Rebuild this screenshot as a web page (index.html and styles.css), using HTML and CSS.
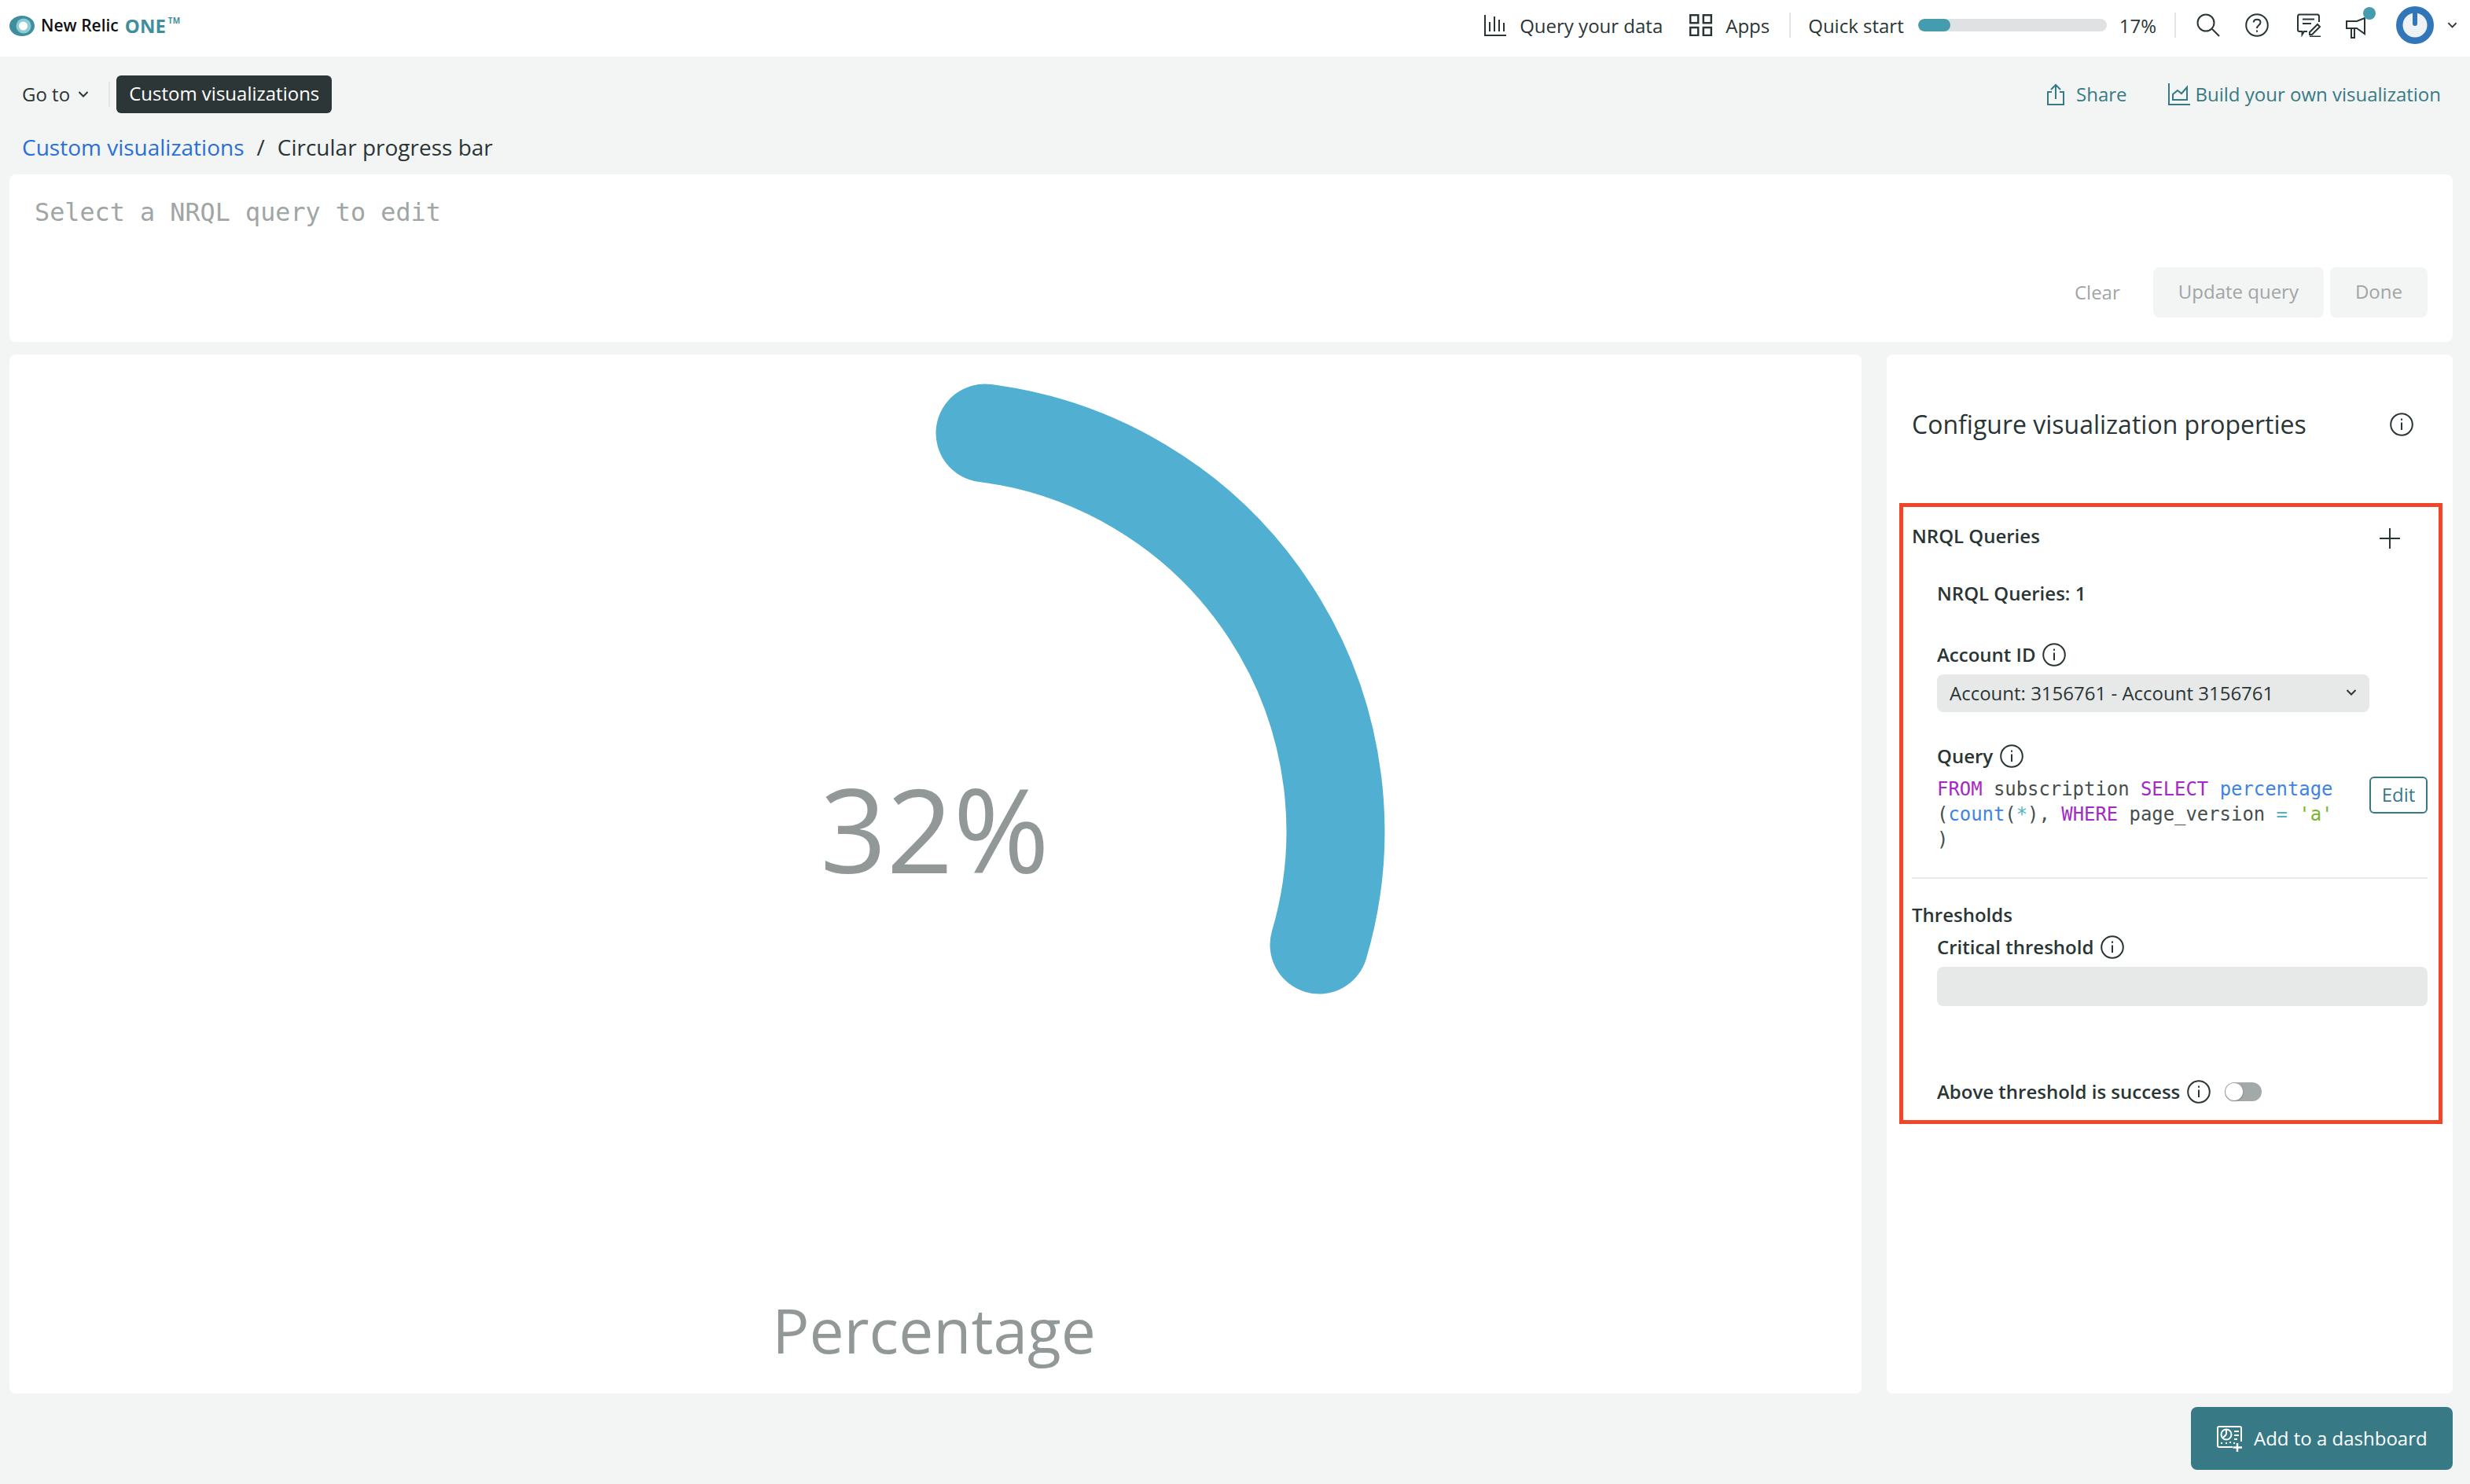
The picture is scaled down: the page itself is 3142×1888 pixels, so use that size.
FILE: index.html
```html
<!DOCTYPE html>
<html>
<head>
    <title>Circular progress bar</title>
    <link rel="stylesheet" href="styles.css">
</head>
<body>
<svg class="defs" width="0" height="0">
    <symbol id="info" viewBox="0 0 30 30">
        <circle cx="15" cy="15" r="13.8" fill="none" stroke="currentColor" stroke-width="2"/>
        <path d="M15 12.5V22" stroke="currentColor" stroke-width="2" fill="none"/>
        <path d="M15 7.5V9.8" stroke="currentColor" stroke-width="2" fill="none"/>
    </symbol>
    <symbol id="chevron" viewBox="0 0 14 10">
        <path d="M1.5 2L7 7.5L12.5 2" stroke="currentColor" stroke-width="2" fill="none"/>
    </symbol>
</svg>

<header class="topbar">
    <div class="logo">
        <svg class="logo-mark" viewBox="0 0 32 26">
            <ellipse cx="16" cy="13" rx="16" ry="13" fill="#3f8e9e"/>
            <circle cx="18" cy="13" r="9.5" fill="#8ccdd4"/>
            <circle cx="17.5" cy="13" r="5.5" fill="#fff"/>
        </svg>
        <span class="logo-name">New Relic</span>
        <span class="logo-one">ONE</span><span class="logo-tm">TM</span>
    </div>
    <nav class="topnav">
        <a class="topnav-item query-link">
            <svg class="icon-query" viewBox="0 0 28 28" fill="none" stroke="#2a3536" stroke-width="2">
                <path d="M1 1V27H28"/>
                <path d="M7 10V22M13 3V22M19 7V22M25 11V22"/>
            </svg>
            Query your data
        </a>
        <a class="topnav-item apps-link">
            <svg class="icon-apps" viewBox="0 0 29 28" fill="none" stroke="#2a3536" stroke-width="2.5">
                <rect x="1.2" y="1.2" width="10" height="10"/>
                <rect x="17.8" y="1.2" width="10" height="10"/>
                <rect x="1.2" y="17" width="10" height="10"/>
                <rect x="17.8" y="17" width="10" height="10"/>
            </svg>
            Apps
        </a>
        <span class="divider first-divider"></span>
        <span class="quick-label">Quick start</span>
        <div class="progress"><div class="progress-fill" style="width: 17%"></div></div>
        <span class="quick-value">17%</span>
        <span class="divider second-divider"></span>
        <svg class="icon-search" viewBox="0 0 30 30" fill="none" stroke="#2a3536" stroke-width="2">
            <circle cx="12" cy="12" r="10.5"/>
            <path d="M20 20L29 29"/>
        </svg>
        <svg class="icon-help" viewBox="0 0 30 30" fill="none" stroke="#2a3536" stroke-width="2">
            <circle cx="15" cy="15" r="13.8"/>
            <path d="M10.8 11.5C10.8 6.5 19.5 6.5 19.5 11.5C19.5 15 15 15 15 19"/>
            <path d="M15 21.5V23.8"/>
        </svg>
        <svg class="icon-feedback" viewBox="0 0 30 30" fill="none" stroke="#2a3536" stroke-width="2">
            <path d="M13 23H9L6.5 27V23H3C2 23 1 22 1 21V4C1 2.500 2 1.500 3 1.500H26C27 1.500 28 2.500 28 4V11"/>
            <path d="M7 7.500H22M7 13H18"/>
            <path d="M16 24L26 14L29 17L19 27H16Z"/>
            <path d="M16 29.500H30"/>
        </svg>
        <span class="notify">
            <svg class="icon-megaphone" viewBox="0 0 30 30" fill="none" stroke="#2a3536" stroke-width="2">
                <path d="M1 8H14L24 4V24L14 17H1Z"/>
                <path d="M7 17V29H11V17"/>
            </svg>
            <span class="notify-dot"></span>
        </span>
        <svg class="avatar" viewBox="0 0 48 48">
            <circle cx="24" cy="24" r="24" fill="#2f77b8"/>
            <circle cx="24" cy="24" r="15.500" fill="#eef2f5"/>
            <path d="M24 6V22" stroke="#2f77b8" stroke-width="6" stroke-linecap="round" fill="none"/>
        </svg>
        <svg class="chevron-sm" viewBox="0 0 14 10"><use href="#chevron"/></svg>
    </nav>
</header>

<div class="toolbar">
    <div class="toolbar-left">
        <span class="goto">Go to</span>
        <svg class="chevron-goto"><use href="#chevron"/></svg>
        <span class="toolbar-sep"></span>
        <span class="pill">Custom visualizations</span>
    </div>
    <div class="toolbar-right">
        <a class="action share-action">
            <svg class="icon-share" viewBox="0 0 22 28" fill="none" stroke="#377a85" stroke-width="2">
                <path d="M6 11H1V27H21V11H16"/>
                <path d="M11 20V2M5 8L11 2L17 8"/>
            </svg>
            Share
        </a>
        <a class="action">
            <svg class="icon-build" viewBox="0 0 28 28" fill="none" stroke="#377a85" stroke-width="2">
                <path d="M1 0V27H28"/>
                <path d="M6 21V14L12 9L17 13L24 5V21Z"/>
            </svg>
            Build your own visualization
        </a>
    </div>
</div>

<div class="breadcrumb">
    <a class="crumb-link">Custom visualizations</a>
    <span class="crumb-sep">/</span>
    <span>Circular progress bar</span>
</div>

<section class="query-card">
    <div class="query-placeholder">Select a NRQL query to edit</div>
    <div class="query-actions">
        <span class="btn-clear">Clear</span>
        <span class="btn-disabled">Update query</span>
        <span class="btn-disabled">Done</span>
    </div>
</section>

<main class="main-row">
    <section class="chart-card">
        <svg class="chart" viewBox="12 451 2356 1322">
            <path d="M1253 551A510.500 510.500 0 0 1 1678 1202" fill="none" stroke="#51b0d2" stroke-width="125" stroke-linecap="round"/>
            <text x="1189" y="1111" text-anchor="middle" class="chart-value">32%</text>
            <text x="1188" y="1722" text-anchor="middle" class="chart-label">Percentage</text>
        </svg>
    </section>

    <aside class="config-panel">
        <div class="config-head">
            <h2>Configure visualization properties</h2>
            <svg class="info-lg"><use href="#info"/></svg>
        </div>

        <div class="config-box">
            <div class="row-between nrql-head">
                <span class="label">NRQL Queries</span>
                <svg class="icon-plus" viewBox="0 0 26 26" fill="none" stroke="#2a3536" stroke-width="2">
                    <path d="M13 0V26M0 13H26"/>
                </svg>
            </div>
            <div class="indent">
                <div class="label count-label">NRQL Queries: 1</div>
                <div class="label label-info account-label">Account ID <svg class="info"><use href="#info"/></svg></div>
                <div class="select">
                    Account: 3156761 - Account 3156761
                    <svg class="chevron-select" viewBox="0 0 14 10"><use href="#chevron"/></svg>
                </div>
                <div class="label label-info query-label">Query <svg class="info"><use href="#info"/></svg></div>
                <div class="code-row">
                    <code class="code">
                        <div><span class="kw">FROM</span> subscription <span class="kw">SELECT</span> <span class="fn">percentage</span></div>
                        <div>(<span class="fn">count</span>(<span class="op">*</span>), <span class="kw">WHERE</span> page_version <span class="op">=</span> <span class="str">'a'</span></div>
                        <div>)</div>
                    </code>
                    <span class="btn-edit">Edit</span>
                </div>
            </div>
            <hr class="rule">
            <div class="label thresholds-label">Thresholds</div>
            <div class="indent">
                <div class="label label-info critical-label">Critical threshold <svg class="info"><use href="#info"/></svg></div>
                <div class="field"></div>
                <div class="label label-info above-label">
                    Above threshold is success <svg class="info"><use href="#info"/></svg>
                    <span class="toggle"><span class="toggle-knob"></span></span>
                </div>
            </div>
        </div>
    </aside>
</main>

<footer class="footer">
    <a class="btn-primary">
        <svg class="icon-dash" viewBox="0 0 33 33" fill="none" stroke="#fff" stroke-width="2">
            <path d="M20 27H3C2 27 1 26 1 25V3C1 2 2 1 3 1H29C30 1 31 2 31 3V20"/>
            <circle cx="12" cy="11" r="6.500"/>
            <path d="M12 11V5M12 11L8 15"/>
            <path d="M22 7H28M22 12H28M22 17H26"/>
            <path d="M5 22H7M11 22H13M17 20V22M21 22H23"/>
            <path d="M26 22V33M20.500 27.500H32" stroke-width="2.500"/>
        </svg>
        <span class="btn-primary-text">Add to a dashboard</span>
    </a>
</footer>
</body>
</html>
```

FILE: styles.css
```css
* {
    box-sizing: border-box;
}
body {
    margin: 0;
    width: 3142px;
    height: 1888px;
    overflow: hidden;
    background-color: #f3f4f4;
    color: #2a3536;
    font-family: "Open Sans", sans-serif;
    font-size: 24px;
}
.defs {
    position: absolute;
}

/* top bar */
.topbar {
    height: 72px;
    background-color: white;
    display: flex;
    align-items: center;
    padding: 0 16px 8px 12px;
}
.logo {
    display: flex;
    align-items: center;
}
.logo-mark {
    width: 32px;
    height: 26px;
    margin-right: 8px;
    margin-top: 1px;
}
.logo-name {
    font-size: 21px;
    font-weight: 600;
    color: #111;
    margin-right: 8px;
}
.logo-one {
    font-size: 24px;
    font-weight: 700;
    color: #3f8e9e;
}
.logo-tm {
    font-size: 10px;
    font-weight: 700;
    color: #3f8e9e;
    margin: -12px 0 0 3px;
}
.topnav {
    margin-left: auto;
    display: flex;
    align-items: center;
}
.topnav-item {
    display: flex;
    align-items: center;
    gap: 17px;
}
.query-link {
    margin-right: 34px;
}
.icon-query {
    width: 28px;
    height: 28px;
}
.icon-apps {
    width: 29px;
    height: 28px;
}
.divider {
    width: 2px;
    height: 32px;
    background-color: #e3e5e5;
}
.first-divider {
    margin: 0 22px 0 25px;
}
.second-divider {
    margin: 0 26px 0 23px;
}
.progress {
    width: 240px;
    height: 16px;
    border-radius: 8px;
    background-color: #e0e1e3;
    margin: 0 16px 0 18px;
    overflow: hidden;
}
.progress-fill {
    height: 100%;
    border-radius: 8px;
    background-color: #459cae;
}
.icon-search {
    width: 30px;
    height: 30px;
    margin-right: 32px;
}
.icon-help {
    width: 30px;
    height: 30px;
    margin-right: 36px;
}
.icon-feedback {
    width: 30px;
    height: 30px;
    margin-right: 32px;
}
.notify {
    position: relative;
    display: flex;
    width: 38px;
    margin-right: 26px;
}
.icon-megaphone {
    width: 30px;
    height: 30px;
    margin-top: 4px;
}
.notify-dot {
    position: absolute;
    left: 22px;
    top: -6px;
    width: 16px;
    height: 16px;
    border-radius: 50%;
    background-color: #459cae;
}
.avatar {
    width: 48px;
    height: 48px;
    margin-right: 17px;
}
.chevron-sm {
    width: 13px;
    height: 10px;
}

/* toolbar */
.toolbar {
    display: flex;
    justify-content: space-between;
    align-items: center;
    padding: 24px 37px 0 28px;
}
.toolbar-left {
    display: flex;
    align-items: center;
}
.goto {
    margin-top: -2px;
}
.chevron-goto {
    width: 14px;
    height: 10px;
    margin-left: 10px;
}
.toolbar-sep {
    width: 2px;
    height: 32px;
    background-color: #e3e5e5;
    margin: 0 8px 0 25px;
}
.pill {
    height: 48px;
    line-height: 46px;
    padding: 0 16px;
    border-radius: 6px;
    background-color: #2c3637;
    color: white;
}
.toolbar-right {
    display: flex;
    align-items: center;
    color: #377a85;
}
.action {
    display: flex;
    align-items: center;
    gap: 15px;
    padding-bottom: 2px;
}
.share-action {
    margin-right: 52px;
}
.icon-share {
    width: 22px;
    height: 28px;
    margin-bottom: -2px;
}
.icon-build {
    width: 28px;
    height: 28px;
    margin-bottom: -2px;
    margin-right: -8px;
}

/* breadcrumb */
.breadcrumb {
    display: flex;
    gap: 16px;
    height: 38px;
    line-height: 38px;
    margin: 24px 0 16px;
    padding-left: 28px;
    font-size: 28px;
}
.crumb-link {
    color: #2a6fd8;
}

/* query editor */
.query-card {
    height: 213px;
    margin: 0 22px 0 12px;
    padding: 26px 32px 0;
    background-color: white;
    border-radius: 8px;
}
.query-placeholder {
    height: 44px;
    line-height: 44px;
    font-family: "DejaVu Sans Mono", monospace;
    font-size: 31.8px;
    color: #a0a5a5;
}
.query-actions {
    display: flex;
    align-items: center;
    justify-content: flex-end;
    gap: 8px;
    margin-top: 48px;
    color: #a0a5a5;
}
.btn-clear {
    margin-right: 34px;
    padding-bottom: 2px;
}
.btn-disabled {
    height: 64px;
    line-height: 62px;
    padding: 0 32px;
    border-radius: 8px;
    background-color: #f3f4f4;
}

/* chart + config */
.main-row {
    display: flex;
    gap: 32px;
    height: 1322px;
    margin: 16px 22px 0 12px;
}
.chart-card {
    flex: 1;
    background-color: white;
    border-radius: 8px;
    overflow: hidden;
}
.chart {
    display: block;
    width: 100%;
    height: 100%;
}
.chart-value {
    font-size: 148px;
    font-weight: 400;
    fill: #929898;
}
.chart-label {
    font-size: 78.5px;
    font-weight: 400;
    fill: #929898;
}
.config-panel {
    width: 720px;
    padding: 66px 13px 0 16px;
    background-color: white;
    border-radius: 8px;
}
.config-head {
    display: flex;
    align-items: center;
    justify-content: space-between;
    height: 44px;
    padding: 0 37px 0 16px;
    margin-bottom: 79px;
}
.config-head h2 {
    margin: 0;
    font-size: 32px;
    font-weight: 400;
}
.info-lg {
    width: 30px;
    height: 30px;
    margin-top: 1px;
}
.info {
    width: 30px;
    height: 30px;
    margin-left: 3px;
}
.config-box {
    height: 790px;
    border: 5px solid #f04528;
    padding: 22px 14px 0 11px;
}
.label {
    font-weight: 600;
    line-height: 30px;
    height: 32px;
}
.label-info {
    display: flex;
    align-items: center;
    gap: 6px;
}
.row-between {
    display: flex;
    align-items: center;
    justify-content: space-between;
}
.nrql-head {
    height: 32px;
    padding-right: 35px;
}
.icon-plus {
    width: 26px;
    height: 26px;
    margin-top: 4px;
}
.indent {
    padding-left: 32px;
}
.count-label {
    margin-top: 41px;
}
.account-label {
    margin-top: 45px;
}
.select {
    width: 550px;
    height: 48px;
    margin-top: 9px;
    padding: 0 16px 2px 16px;
    display: flex;
    align-items: center;
    justify-content: space-between;
    border-radius: 8px;
    background-color: #e7e9e9;
}
.chevron-select {
    width: 14px;
    height: 10px;
}
.query-label {
    margin-top: 40px;
}
.code-row {
    display: flex;
    justify-content: space-between;
    margin-top: 10px;
}
.code {
    font-family: "DejaVu Sans Mono", monospace;
    font-size: 23.9px;
    line-height: 32px;
    color: #464e4e;
}
.kw {
    color: #a32ac4;
}
.fn {
    color: #3e84e0;
}
.op {
    color: #4db6c6;
}
.str {
    color: #7ab32e;
}
.btn-edit {
    width: 74px;
    height: 47px;
    line-height: 41px;
    text-align: center;
    border: 2px solid #377a85;
    border-radius: 6px;
    color: #377a85;
}
.rule {
    height: 2px;
    margin: 32px 0 0;
    border: 0;
    background-color: #e9ebeb;
}
.thresholds-label {
    margin-top: 31px;
}
.critical-label {
    margin-top: 8px;
}
.field {
    height: 50px;
    margin-top: 9px;
    border-radius: 8px;
    background-color: #e7e9e9;
}
.above-label {
    margin-top: 93px;
}
.toggle {
    position: relative;
    width: 47px;
    height: 24px;
    margin-left: 12px;
    border-radius: 12px;
    background-color: #a3a8a8;
}
.toggle-knob {
    position: absolute;
    left: 1px;
    top: 1px;
    width: 22px;
    height: 22px;
    border-radius: 50%;
    background-color: white;
    box-shadow: 0 1px 2px rgba(0, 0, 0, 0.25);
}

/* footer */
.footer {
    display: flex;
    justify-content: flex-end;
    margin: 17px 22px 0 0;
}
.btn-primary {
    display: flex;
    align-items: center;
    gap: 14px;
    width: 333px;
    height: 80px;
    padding-left: 33px;
    border-radius: 8px;
    background-color: #377a85;
    color: white;
}
.btn-primary-text {
    margin-top: -2px;
}
.icon-dash {
    width: 33px;
    height: 33px;
}
```
